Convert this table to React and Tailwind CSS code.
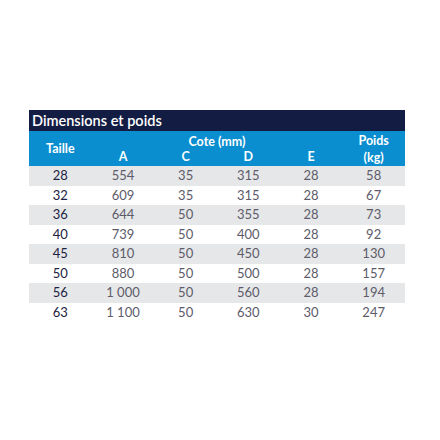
import React from 'react';

const rows = [
  ['28', '554', '35', '315', '28', '58'],
  ['32', '609', '35', '315', '28', '67'],
  ['36', '644', '50', '355', '28', '73'],
  ['40', '739', '50', '400', '28', '92'],
  ['45', '810', '50', '450', '28', '130'],
  ['50', '880', '50', '500', '28', '157'],
  ['56', '1 000', '50', '560', '28', '194'],
  ['63', '1 100', '50', '630', '30', '247'],
];

const App = () => {
  return (
    <div className="w-[440px] h-[440px] bg-white pt-[110px] pl-[29px]" style={{ fontFamily: 'Lato, "Open Sans", sans-serif' }}>
      <div className="w-[376px]">
        <div className="h-[21px] bg-[#131c42] text-white text-[14.5px] font-semibold leading-[21px] pl-[3px]">
          Dimensions et poids
        </div>
        <div className="h-[35px] bg-[#0a8ecf] grid grid-cols-6 grid-rows-2 text-white font-bold text-[12.5px] leading-none pt-[3px] pb-[1px]">
          <div className="row-span-2 flex items-center justify-center">Taille</div>
          <div className="col-start-3 col-span-2 flex items-center justify-center">Cote (mm)</div>
          <div className="col-start-6 row-span-2 flex flex-col items-center justify-center gap-[4px]">
            <span>Poids</span>
            <span>(kg)</span>
          </div>
          <div className="col-start-2 row-start-2 flex items-center justify-center">A</div>
          <div className="col-start-3 row-start-2 flex items-center justify-center">C</div>
          <div className="col-start-4 row-start-2 flex items-center justify-center">D</div>
          <div className="col-start-5 row-start-2 flex items-center justify-center">E</div>
        </div>
        {rows.map((r, i) => (
          <div key={i} className={`grid grid-cols-6 h-[19.5px] items-center text-[13px] ${i % 2 === 0 ? 'bg-[#e6e7e8]' : 'bg-white'}`}>
            {r.map((v, j) => (
              <div key={j} className={`text-center ${j === 0 ? 'text-[#1c2242]' : 'text-[#5d5b6a]'}`}>
                {v}
              </div>
            ))}
          </div>
        ))}
      </div>
    </div>
  );
};

export default App;
